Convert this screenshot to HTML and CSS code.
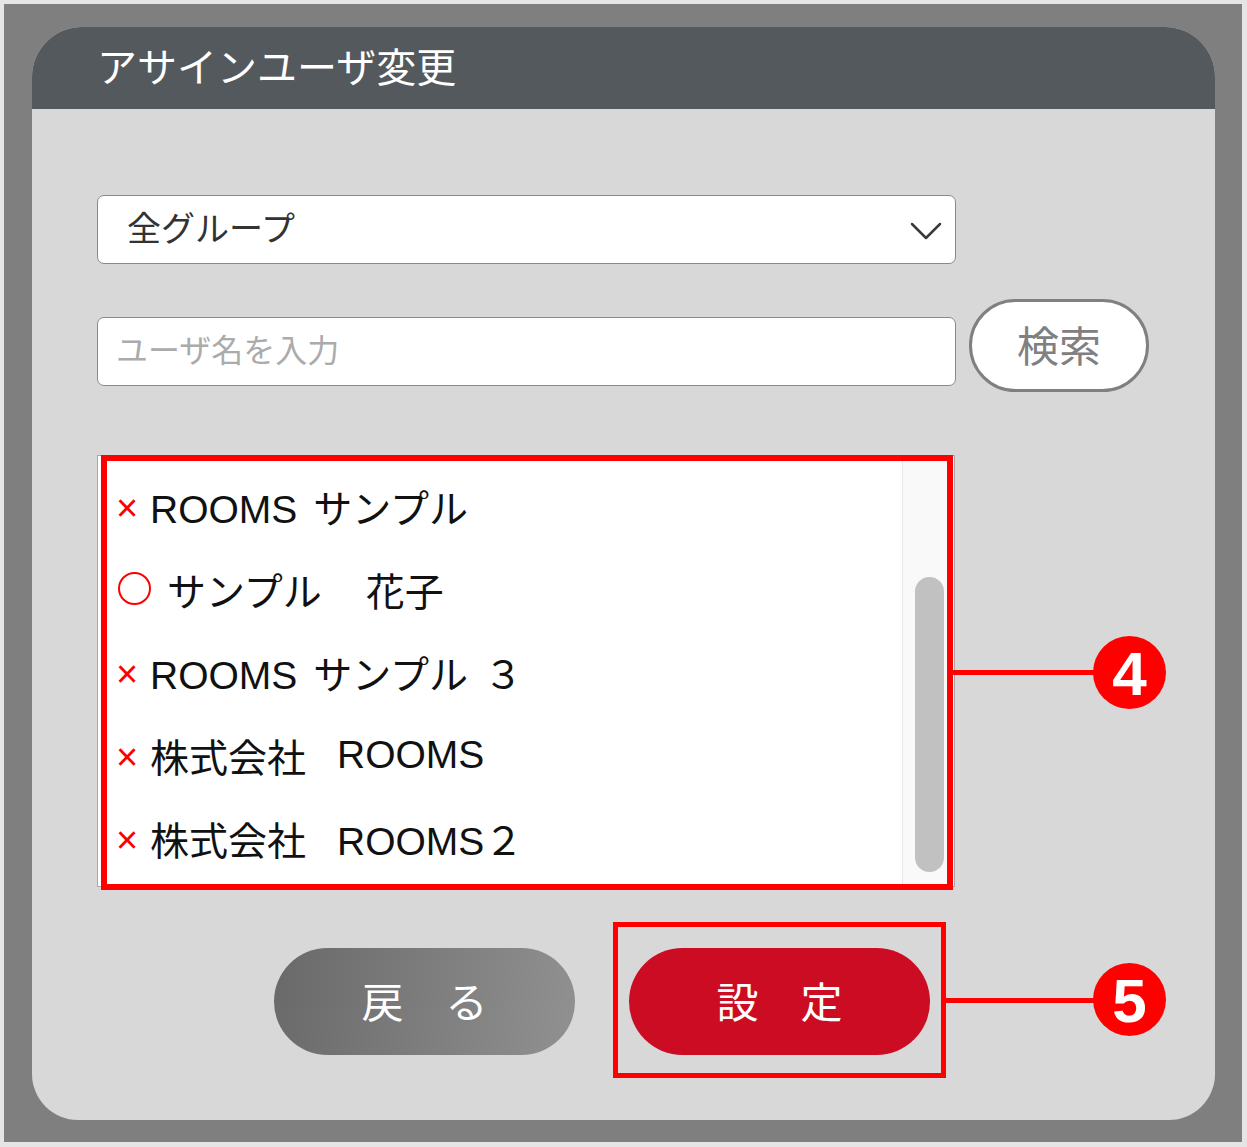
FILE: index.html
```html
<!DOCTYPE html>
<html lang="ja">
<head>
<meta charset="utf-8">
<title>アサインユーザ変更</title>
<link rel="stylesheet" href="styles.css">
</head>
<body>
<div class="screen">
  <div class="stage">
    <div class="panel">
      <div class="panel-header">アサインユーザ変更</div>
      <div class="panel-body">
        <div class="select">
          <span class="select-text">全グループ</span>
          <svg class="chev" width="32" height="20" viewBox="0 0 32 20"><polyline points="2,3 16,17 30,3" fill="none" stroke="#3a3a3a" stroke-width="2.5" stroke-linecap="round" stroke-linejoin="round"/></svg>
        </div>
        <div class="search-row">
          <div class="input">ユーザ名を入力</div>
          <div class="search-btn">検索</div>
        </div>
        <div class="list-wrap">
          <div class="list">
            <ul class="items">
              <li><span class="mark-x">×</span>ROOMS サンプル</li>
              <li><span class="mark-o"></span>サンプル<span class="sp2">　</span>花子</li>
              <li><span class="mark-x">×</span>ROOMS サンプル ３</li>
              <li><span class="mark-x">×</span>株式会社<span class="sp">　</span>ROOMS</li>
              <li><span class="mark-x">×</span>株式会社<span class="sp">　</span>ROOMS２</li>
            </ul>
            <div class="track"><div class="thumb"></div></div>
          </div>
          <div class="hl hl-list"></div>
          <div class="line line4"></div>
          <div class="badge badge4">4</div>
        </div>
        <div class="btn-row">
          <div class="btn back">戻　る</div>
          <div class="set-wrap">
            <div class="btn set">設　定</div>
            <div class="hl hl-set"></div>
            <div class="line line5"></div>
            <div class="badge badge5">5</div>
          </div>
        </div>
      </div>
    </div>
  </div>
</div>
</body>
</html>
```
FILE: styles.css
```css
* { box-sizing: border-box; margin: 0; padding: 0; }
html, body { width: 1247px; height: 1147px; overflow: hidden; }
body {
  background: #e5e5e5;
  font-family: "Noto Sans CJK JP", "Liberation Sans", sans-serif;
}
.screen {
  width: 1247px;
  height: 1147px;
  padding: 4px 5px 5px 4px;
  background: #e5e5e5;
}
.stage {
  width: 1238px;
  height: 1138px;
  background: #7f7f7f;
  padding: 23px 27px 22px 28px;
}
.panel {
  width: 1183px;
  height: 1093px;
  background: #d8d8d8;
  border-radius: 50px 50px 46px 46px;
  overflow: hidden;
}
.panel-header {
  height: 82px;
  background: #54595d;
  color: #fff;
  font-size: 40px;
  line-height: 76px;
  padding-left: 65px;
}
.panel-body {
  padding: 86px 0 0 65px;
}
.select {
  width: 859px;
  height: 69px;
  background: #fff;
  border: 1.5px solid #8a8a8a;
  border-radius: 7px;
  display: flex;
  align-items: center;
  justify-content: space-between;
  padding: 0 13px 0 29px;
  font-size: 34px;
  color: #333;
}
.select-text { margin-top: -7px; }
.chev { display: block; margin-top: 2px; }
.search-row {
  display: flex;
  align-items: flex-start;
  gap: 13px;
  margin-top: 35px;
}
.input {
  width: 859px;
  height: 69px;
  margin-top: 18px;
  background: #fff;
  border: 1.5px solid #8a8a8a;
  border-radius: 7px;
  display: flex;
  align-items: center;
  padding: 0 0 7px 18px;
  font-size: 32px;
  color: #ababab;
}
.search-btn {
  width: 180px;
  height: 93px;
  background: #fff;
  border: 3.5px solid #808080;
  border-radius: 47px;
  display: flex;
  align-items: center;
  justify-content: center;
  padding-bottom: 5px;
  font-size: 42px;
  color: #808080;
}
.list-wrap {
  position: relative;
  width: 858px;
  height: 432px;
  margin-top: 63px;
}
.list {
  display: flex;
  width: 858px;
  height: 432px;
  background: #fff;
  border: 1px solid #a8a8a8;
}
.items {
  flex: 1;
  list-style: none;
  padding: 8px 0 0 18px;
}
.items li {
  height: 83px;
  display: flex;
  align-items: center;
  font-family: "Liberation Sans", "Noto Sans CJK JP", sans-serif;
  font-size: 39px;
  color: #111;
  white-space: pre;
  word-spacing: 5px;
}
.mark-x {
  display: inline-block;
  width: 34px;
  font-size: 38px;
  color: #ff0000;
  padding-top: 6px;
}
.mark-o {
  display: inline-block;
  width: 33px;
  height: 33px;
  margin-left: 2px;
  margin-right: 16px;
  border: 2.5px solid #ff0000;
  border-radius: 50%;
}
.sp { letter-spacing: -8px; }
.sp2 { letter-spacing: 5px; }
.track {
  width: 52px;
  background: #f9f9f9;
  border-left: 1px solid #e8e8e8;
  padding: 121px 0 0 12px;
}
.thumb {
  width: 29px;
  height: 295px;
  background: #c1c1c1;
  border-radius: 15px;
}
.hl {
  position: absolute;
  border: 6px solid #ff0000;
}
.hl-list {
  left: 4px;
  top: 0;
  width: 852px;
  height: 435px;
}
.line {
  position: absolute;
  height: 5px;
  background: #ff0000;
}
.line4 { left: 856px; top: 215px; width: 141px; }
.badge {
  position: absolute;
  width: 73px;
  height: 73px;
  border-radius: 50%;
  background: #ff0000;
  color: #fff;
  font-family: "Liberation Sans", sans-serif;
  font-weight: bold;
  font-size: 62px;
  line-height: 75px;
  text-align: center;
}
.badge4 { left: 996px; top: 181px; }
.btn-row {
  display: flex;
  gap: 54px;
  margin-top: 61px;
  padding-left: 177px;
}
.btn {
  width: 301px;
  height: 107px;
  border-radius: 54px;
  color: #fff;
  font-size: 42px;
  display: flex;
  align-items: center;
  justify-content: center;
  padding-bottom: 4px;
}
.back { background: linear-gradient(100deg, #696969, #919191); }
.set-wrap { position: relative; }
.set { background: #cb0c22; }
.hl-set {
  left: -16px;
  top: -26px;
  width: 333px;
  height: 156px;
  border-width: 5px;
}
.line5 { left: 317px; top: 50px; width: 148px; }
.badge5 { left: 464px; top: 15px; }
```
